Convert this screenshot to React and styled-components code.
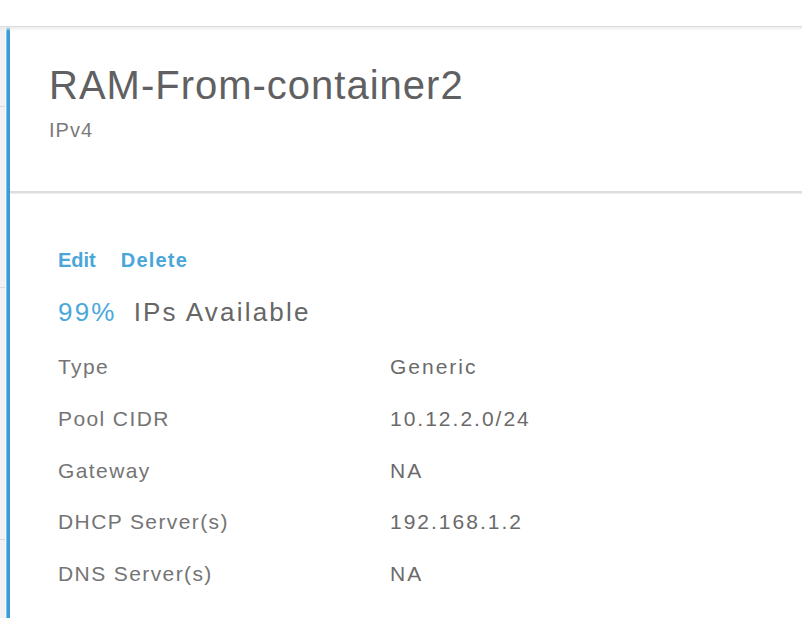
import React from "react";
import styled, { createGlobalStyle } from "styled-components";

const Global = createGlobalStyle`
  html, body { margin: 0; padding: 0; background: #ffffff; }
  body { font-family: "Liberation Sans", Arial, sans-serif; }
  * { box-sizing: border-box; }
`;

const Page = styled.div`
  width: 802px;
  height: 618px;
  overflow: hidden;
  background: #fff;
  padding-top: 26px;
`;

const Frame = styled.div`
  display: flex;
  height: 592px;
  border-top: 1px solid #dcdcdc;
  position: relative;
  &::after {
    content: "";
    position: absolute;
    left: 0;
    right: 0;
    top: 0;
    height: 4px;
    background: linear-gradient(#ececec, rgba(255, 255, 255, 0));
    pointer-events: none;
  }
`;

const Strip = styled.div`
  width: 6px;
  flex: none;
  display: flex;
  flex-direction: column;
  background: #f1f1f1;
  border-right: 1px solid #fafafa;
`;

const StripCell = styled.div`
  height: ${(p) => p.$h}px;
  flex: none;
  border-bottom: 1px solid #dadada;
`;

const Accent = styled.div`
  width: 4px;
  flex: none;
  background: #3a9cd6;
  border-left: 1px solid #7fc0e6;
`;

const Panel = styled.div`
  flex: 1;
  display: flex;
  flex-direction: column;
  min-width: 0;
`;

const Header = styled.div`
  padding: 34px 0 49px 39px;
  border-bottom: 2px solid #dedede;
  box-shadow: 0 1px 0 #eeeeee;
`;

const Title = styled.h1`
  margin: 0;
  font-size: 40px;
  line-height: 48px;
  font-weight: 400;
  letter-spacing: 1px;
  color: #606063;
`;

const Subtitle = styled.div`
  margin-top: 9px;
  font-size: 20px;
  line-height: 24px;
  letter-spacing: 1px;
  color: #7a7a7a;
`;

const Body = styled.div`
  padding: 55px 0 0 48px;
`;

const Actions = styled.div`
  display: flex;
  gap: 25px;
`;

const ActionLink = styled.a`
  font-size: 20px;
  line-height: 24px;
  font-weight: 700;
  letter-spacing: ${(p) => (p.$wide ? "1.2px" : "0px")};
  color: #4aa6d9;
  cursor: pointer;
  text-decoration: none;
`;

const Usage = styled.div`
  margin-top: 25px;
  font-size: 26px;
  line-height: 30px;
  letter-spacing: 2.2px;
  color: #666;
  display: flex;
`;

const Percent = styled.span`
  color: #4aa8db;
  margin-right: 17px;
`;

const Details = styled.div`
  margin-top: 14px;
  display: grid;
  grid-template-columns: 332px 1fr;
  grid-auto-rows: 51.8px;
  align-items: center;
`;

const Label = styled.div`
  font-size: 21px;
  line-height: 51.8px;
  letter-spacing: 1.4px;
  color: #747474;
`;

const Value = styled.div`
  font-size: 21px;
  line-height: 51.8px;
  letter-spacing: 2px;
  color: #6a6a6a;
`;

const rows = [
  ["Type", "Generic"],
  ["Pool CIDR", "10.12.2.0/24"],
  ["Gateway", "NA"],
  ["DHCP Server(s)", "192.168.1.2"],
  ["DNS Server(s)", "NA"],
];

export default function App() {
  return (
    <>
      <Global />
      <Page>
        <Frame>
          <Strip>
            <StripCell $h={80} />
            <StripCell $h={181} />
            <StripCell $h={252} />
          </Strip>
          <Accent />
          <Panel>
            <Header>
              <Title>RAM-From-container2</Title>
              <Subtitle>IPv4</Subtitle>
            </Header>
            <Body>
              <Actions>
                <ActionLink>Edit</ActionLink>
                <ActionLink $wide>Delete</ActionLink>
              </Actions>
              <Usage>
                <Percent>99%</Percent>
                <span>IPs Available</span>
              </Usage>
              <Details>
                {rows.map(([k, v]) => (
                  <React.Fragment key={k}>
                    <Label>{k}</Label>
                    <Value>{v}</Value>
                  </React.Fragment>
                ))}
              </Details>
            </Body>
          </Panel>
        </Frame>
      </Page>
    </>
  );
}
